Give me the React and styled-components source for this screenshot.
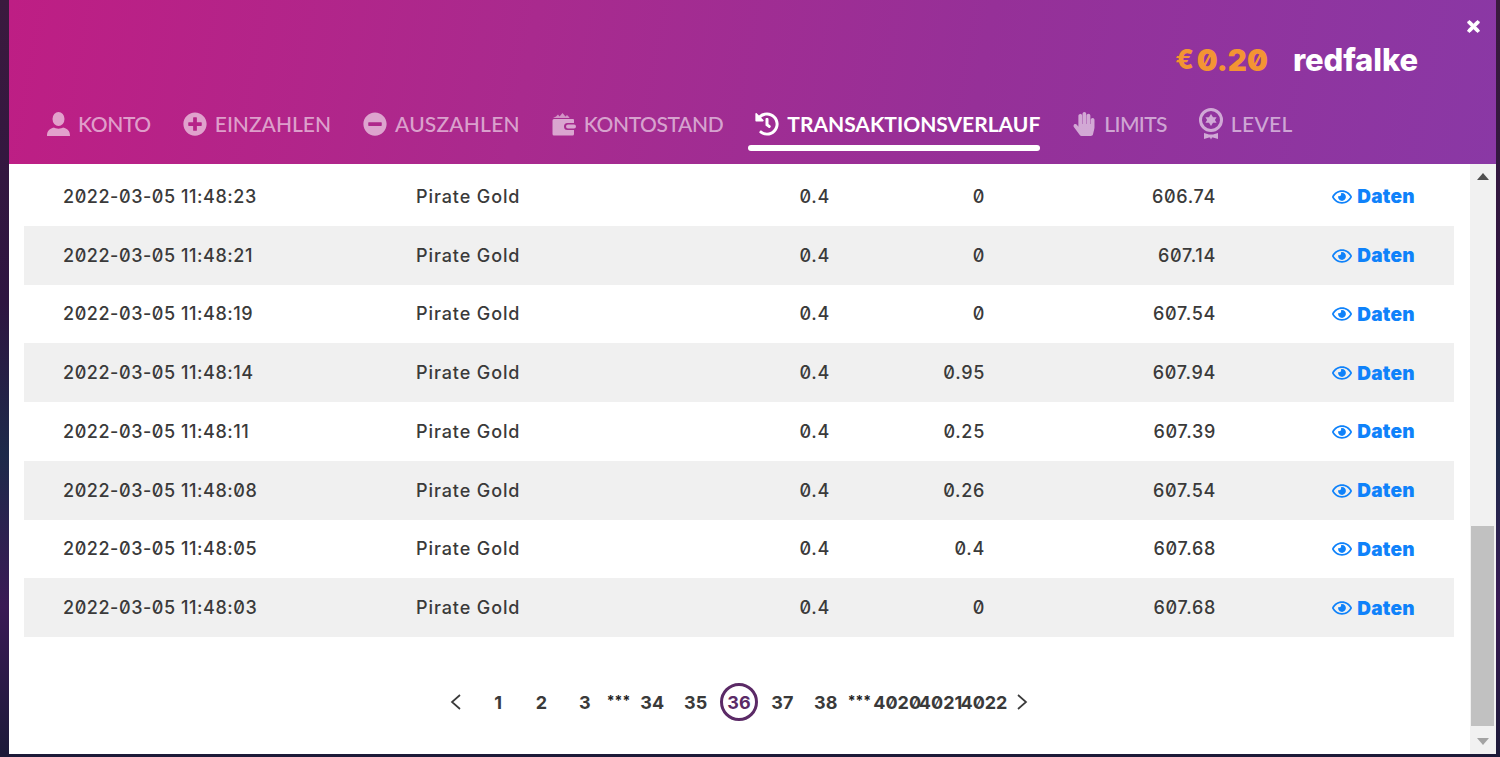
import React from 'react';
import styled, { createGlobalStyle } from 'styled-components';
import { FaPlusCircle, FaMinusCircle, FaHistory, FaHandPaper, FaRegEye, FaTimes } from 'react-icons/fa';

const Global = createGlobalStyle`
  html, body { margin: 0; padding: 0; height: 757px; overflow: hidden; }
  body { background: linear-gradient(180deg, #3a1a3e 0%, #2e1540 40%, #1d2a4a 60%, #3a1a55 80%, #1c1a38 100%); }
`;
const Page = styled.div`
  width: 1500px; height: 757px; padding: 0 4px 3px 9px; box-sizing: border-box;
  font-family: Inter, "Noto Sans", sans-serif;
`;
const Modal = styled.div`
  height: 754px; display: flex; flex-direction: column; background: #fff; position: relative;
`;
const Header = styled.header`
  height: 164px; flex: none; box-sizing: border-box; padding: 42px 78px 0 38px;
  display: flex; flex-direction: column;
  background: linear-gradient(100deg, #be1e84 0%, #a92a8e 35%, #963098 65%, #8a38a5 100%);
`;
const Close = styled.span`
  position: absolute; top: 18px; right: 16px; color: #fff; line-height: 0;
  svg { width: 13px; height: 17px; stroke: #fff; stroke-width: 30; }
`;
const Account = styled.div`
  display: flex; justify-content: flex-end; align-items: center; height: 36px;
`;
const Balance = styled.div`
  color: #f39433; font-weight: 900; font-size: 29.500px; line-height: 36px;
  font-feature-settings: "zero" 1; margin-right: 25px; display: flex; align-items: center; gap: 3px;
`;
const Euro = styled.span`font-size: 27px; font-weight: 800;`;
const User = styled.div`
  color: #fff; font: 800 31px/36px Inter, sans-serif; letter-spacing: -0.1px;
`;
const Tabs = styled.nav`
  display: flex; gap: 32px; margin-top: 28px;
`;
const Tab = styled.div`
  position: relative; display: flex; align-items: center; gap: 8px; height: 36px;
  font: ${p => (p.$active ? 700 : 500)} 21px/36px Lato, sans-serif;
  letter-spacing: ${p => p.$track || 0}px;
  color: ${p => (p.$active ? '#fff' : 'rgba(255,255,255,.58)')};
  svg { display: block; flex: none; }
  ${p => p.$active && `
    &::after { content: ""; position: absolute; left: -7px; right: 0; bottom: -9px; height: 6px; border-radius: 3px; background: #fff; }
  `}
`;
const Content = styled.div`flex: 1; display: flex; min-height: 0;`;
const Main = styled.main`flex: 1; padding: 3px 16px 0 15px; min-width: 0;`;
const Row = styled.div`
  display: grid; grid-template-columns: 353px 260px 154px 155px 231px 199px;
  align-items: center; height: 58.75px; padding: 0 39px;
  background: ${p => (p.$alt ? '#f0f0f0' : '#fff')};
  color: #3a3a3a; font-size: 18px; font-weight: 500; font-feature-settings: "zero" 1;
  letter-spacing: 0.7px;
`;
const Stamp = styled.span`letter-spacing: 0.55px;`;
const Game = styled.span`letter-spacing: 0.9px;`;
const Num = styled.span`text-align: right;`;
const Details = styled.a`
  justify-self: end; display: flex; align-items: center; gap: 5px; padding-top: 1px;
  color: #0f82fa; font-weight: 900; font-size: 19px; letter-spacing: .3px;
`;
const Pager = styled.div`
  display: flex; justify-content: center; align-items: center; height: 38px; margin-top: 46px; padding-left: 1px;
  color: #3a3a3a; font-size: 18px; font-weight: 700; font-feature-settings: "zero" 1;
`;
const PageItem = styled.span`
  width: 43.4px; flex: none; display: flex; justify-content: center; white-space: nowrap;
`;
const Current = styled(PageItem)`
  color: #5b2a66; position: relative;
  &::before { content: ""; position: absolute; top: -9px; left: 2.7px; width: 32px; height: 32px; border: 3px solid #5b2a66; border-radius: 50%; }
`;
const Dots = styled.span`
  width: ${p => (p.$wide ? 28 : 24)}px; padding-right: ${p => (p.$wide ? 4 : 0)}px; box-sizing: border-box; flex: none;
  text-align: center; font-size: 14px; font-weight: 700; color: #222; margin-top: -4px;
`;
const Arrow = styled.svg`width: 14px; height: 18px; flex: none; fill: none; stroke: #3a3a3a; stroke-width: 1.7;`;
const ArrowBox = styled.span`
  flex: none; display: flex; box-sizing: border-box;
  width: ${p => (p.$end ? 24 : 27)}px;
  padding-left: ${p => (p.$end ? 9 : 0)}px;
`;
const Scrollbar = styled.div`
  width: 26px; flex: none; background: #f1f1f1; display: flex; flex-direction: column; justify-content: space-between; align-items: center;
  position: relative;
`;
const Thumb = styled.div`
  position: absolute; left: 1px; right: 2px; top: 362px; height: 200px; background: #c1c1c1;
`;
const Tri = styled.span`
  width: 0; height: 0; border-left: 6px solid transparent; border-right: 6px solid transparent; margin: 9px 0;
  ${p => (p.$up ? 'border-bottom: 7px solid #505050;' : 'border-top: 7px solid #a3a3a3;')}
`;

const Person = () => (
  <svg width="23" height="24" viewBox="0 0 23 24" fill="currentColor">
    <ellipse cx="11.5" cy="7" rx="6" ry="7" />
    <path d="M0 24c0-5 2-7 7-8.500 1.500 1.500 7.500 1.500 9 0 5 1.500 7 3.500 7 8.500z" />
  </svg>
);
const Wallet = () => (
  <svg width="24" height="24" viewBox="0 0 24 24" fill="currentColor">
    <path d="M1 6l3-1.500L6 2.500l1.500 2 3-3.500 3 3.500 1.500-1.500 2 2 .6 1H2z" fillOpacity=".85" />
    <path fillRule="evenodd" d="M2 7h19a1 1 0 0 1 1 1v3h-6.500a3.500 3.500 0 0 0 0 7H22v4a1.500 1.500 0 0 1-1.500 1.500H2a1.500 1.500 0 0 1-1.500-1.500V8.500A1.500 1.500 0 0 1 2 7z" />
    <rect x="14" y="12.500" width="10" height="4" rx="2" />
  </svg>
);
const Medal = () => (
  <svg width="24" height="32" viewBox="0 0 24 32" fill="currentColor">
    <path fillRule="evenodd" d="M12 0a12 12 0 1 1 0 24a12 12 0 0 1 0-24zm0 3a9 9 0 1 0 0 18a9 9 0 0 0 0-18z" />
    <path d="M12 6l2 3.200h3.600l-1.700 2.800 1.700 2.800H14L12 18l-2-3.200H6.400l1.700-2.800-1.700-2.800H10z" />
    <path d="M5 25l5 1.500h4l5-1.500v6l-5-1.500h-1l-1 2-1-2h-1l-5 1.500z" />
  </svg>
);

const rows = [
  ['2022-03-05 11:48:23', '0.4', '0', '606.74'],
  ['2022-03-05 11:48:21', '0.4', '0', '607.14'],
  ['2022-03-05 11:48:19', '0.4', '0', '607.54'],
  ['2022-03-05 11:48:14', '0.4', '0.95', '607.94'],
  ['2022-03-05 11:48:11', '0.4', '0.25', '607.39'],
  ['2022-03-05 11:48:08', '0.4', '0.26', '607.54'],
  ['2022-03-05 11:48:05', '0.4', '0.4', '607.68'],
  ['2022-03-05 11:48:03', '0.4', '0', '607.68'],
];

export default function App() {
  return (
    <Page>
      <Global />
      <Modal>
        <Close><FaTimes /></Close>
        <Header>
          <Account>
            <Balance><Euro>€</Euro>0.20</Balance>
            <User>redfalke</User>
          </Account>
          <Tabs>
            <Tab $track={-0.4}><Person />KONTO</Tab>
            <Tab $track={0}><FaPlusCircle size={24} />EINZAHLEN</Tab>
            <Tab $track={0.2}><FaMinusCircle size={24} />AUSZAHLEN</Tab>
            <Tab $track={-0.4}><Wallet />KONTOSTAND</Tab>
            <Tab $active $track={0}><FaHistory size={24} />TRANSAKTIONSVERLAUF</Tab>
            <Tab $track={-0.6}><FaHandPaper size={24} />LIMITS</Tab>
            <Tab $track={0.3}><Medal />LEVEL</Tab>
          </Tabs>
        </Header>
        <Content>
          <Main>
            {rows.map((r, i) => (
              <Row key={r[0]} $alt={i % 2 === 1}>
                <Stamp>{r[0]}</Stamp>
                <Game>Pirate Gold</Game>
                <Num>{r[1]}</Num>
                <Num>{r[2]}</Num>
                <Num>{r[3]}</Num>
                <Details><FaRegEye size={20} />Daten</Details>
              </Row>
            ))}
            <Pager>
              <ArrowBox><Arrow viewBox="0 0 14 18"><path d="M11 2L3 9l8 7" /></Arrow></ArrowBox>
              {['1', '2', '3'].map(n => <PageItem key={n}>{n}</PageItem>)}
              <Dots>***</Dots>
              {['34', '35'].map(n => <PageItem key={n}>{n}</PageItem>)}
              <Current>36</Current>
              {['37', '38'].map(n => <PageItem key={n}>{n}</PageItem>)}
              <Dots $wide>***</Dots>
              {['4020', '4021', '4022'].map(n => <PageItem key={n}>{n}</PageItem>)}
              <ArrowBox $end><Arrow viewBox="0 0 14 18"><path d="M3 2l8 7-8 7" /></Arrow></ArrowBox>
            </Pager>
          </Main>
          <Scrollbar>
            <Tri $up />
            <Thumb />
            <Tri />
          </Scrollbar>
        </Content>
      </Modal>
    </Page>
  );
}
